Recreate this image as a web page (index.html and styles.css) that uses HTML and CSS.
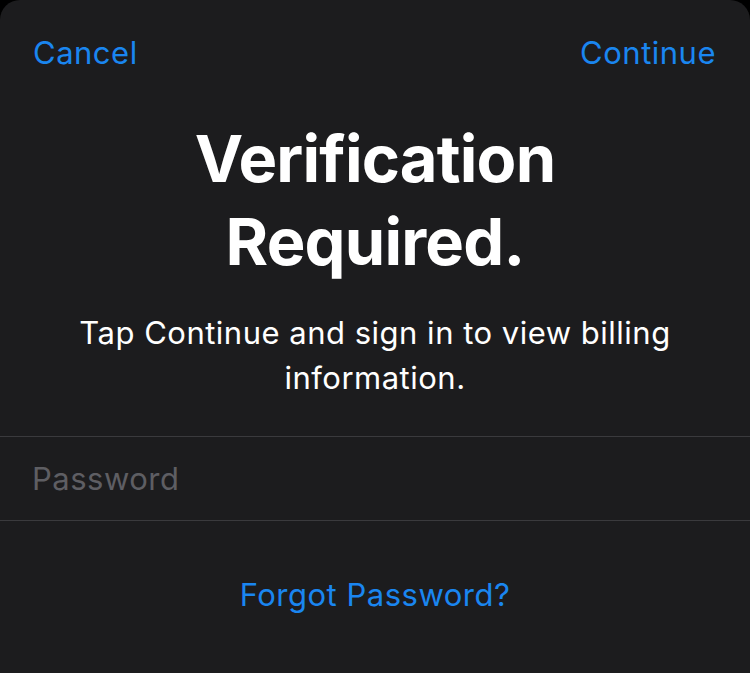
FILE: index.html
```html
<!DOCTYPE html>
<html lang="en">
<head>
<meta charset="utf-8">
<title>Verification Required</title>
<link rel="stylesheet" href="styles.css">
</head>
<body>
<div class="sheet">
  <header class="nav">
    <a class="nav-btn">Cancel</a>
    <a class="nav-btn">Continue</a>
  </header>
  <h1 class="title">Verification<br>Required.</h1>
  <p class="subtitle">Tap Continue and sign in to view billing<br>information.</p>
  <div class="field">
    <span class="placeholder">Password</span>
  </div>
  <div class="forgot"><a class="link">Forgot Password?</a></div>
</div>
</body>
</html>
```
FILE: styles.css
```css
html, body {
  margin: 0;
  padding: 0;
  background: #000;
  height: 100%;
}
body {
  font-family: Inter, "Noto Sans", sans-serif;
  color: #fff;
}
.sheet {
  background: #1c1c1e;
  height: 673px;
  border-radius: 20px 20px 0 0;
  overflow: hidden;
  display: flex;
  flex-direction: column;
}
.nav {
  display: flex;
  justify-content: space-between;
  padding: 35px 34px 0 33px;
}
.nav-btn {
  font-size: 31px;
  line-height: 36px;
  letter-spacing: 0.5px;
  color: #1a86f0;
}
.title {
  margin: 46px 0 0;
  text-align: center;
  font-size: 65px;
  line-height: 83px;
  font-weight: 700;
  letter-spacing: -0.8px;
}
.subtitle {
  margin: 27px 0 0;
  text-align: center;
  font-size: 31px;
  line-height: 45px;
  font-weight: 400;
  letter-spacing: 0.5px;
}
.field {
  margin-top: 36px;
  height: 83px;
  border-top: 1px solid #3a3a3d;
  border-bottom: 1px solid #3a3a3d;
  display: flex;
  align-items: center;
  padding-left: 32px;
}
.placeholder {
  font-size: 31px;
  line-height: 36px;
  letter-spacing: 0.5px;
  color: #5e5e63;
}
.forgot {
  margin-top: 56px;
  text-align: center;
}
.link {
  font-size: 31px;
  line-height: 36px;
  letter-spacing: 0.5px;
  color: #1a86f0;
}
```
